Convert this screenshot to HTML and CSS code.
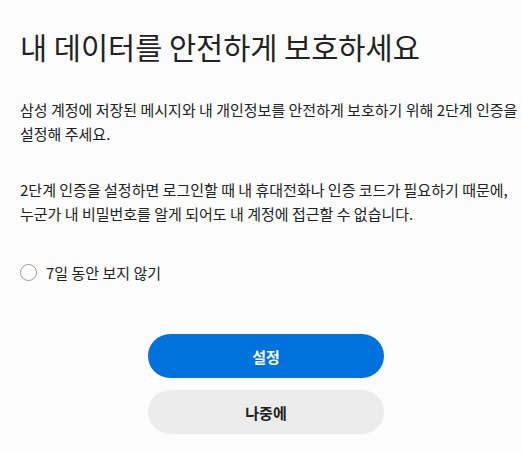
FILE: index.html
```html
<!DOCTYPE html>
<html>
<head>
    <title>2단계 인증</title>
    <link rel="stylesheet" href="styles.css">
</head>
<body>
    <div class="page">
        <h1>내 데이터를 안전하게 보호하세요</h1>
        <p>삼성 계정에 저장된 메시지와 내 개인정보를 안전하게 보호하기 위해 2단계 인증을 설정해 주세요.</p>
        <p>2단계 인증을 설정하면 로그인할 때 내 휴대전화나 인증 코드가 필요하기 때문에, 누군가 내 비밀번호를 알게 되어도 내 계정에 접근할 수 없습니다.</p>
        <label class="check">
            <span class="circle"></span>
            <span>7일 동안 보지 않기</span>
        </label>
        <div class="actions">
            <button type="button" class="btn primary">설정</button>
            <button type="button" class="btn secondary">나중에</button>
        </div>
    </div>
</body>
</html>
```

FILE: styles.css
```css
body {
    margin: 0;
    background-color: #fcfcfc;
    font-family: "Noto Sans CJK KR", "Noto Sans", sans-serif;
    color: #222;
    word-break: keep-all;
}
.page {
    padding: 24px 2px 0 20px;
}
h1 {
    margin: 0;
    font-size: 29.5px;
    font-weight: normal;
    line-height: 44px;
}
p {
    margin: 0;
    font-size: 15px;
    line-height: 24px;
}
h1 + p {
    margin-top: 30px;
}
p + p {
    margin-top: 32px;
}
.check {
    display: flex;
    align-items: center;
    gap: 9px;
    margin-top: 36px;
    font-size: 15px;
}
.circle {
    width: 15px;
    height: 15px;
    border: 1.5px solid #999;
    border-radius: 50%;
}
.actions {
    display: flex;
    flex-direction: column;
    align-items: center;
    gap: 12px;
    margin-top: 51px;
    margin-right: 8px;
}
.btn {
    width: 236px;
    height: 44px;
    border: none;
    border-radius: 22px;
    font-family: inherit;
    font-size: 15px;
    font-weight: bold;
    cursor: pointer;
}
.primary {
    background-color: #0072de;
    color: #fff;
}
.secondary {
    background-color: #ececec;
    color: #222;
}
```
